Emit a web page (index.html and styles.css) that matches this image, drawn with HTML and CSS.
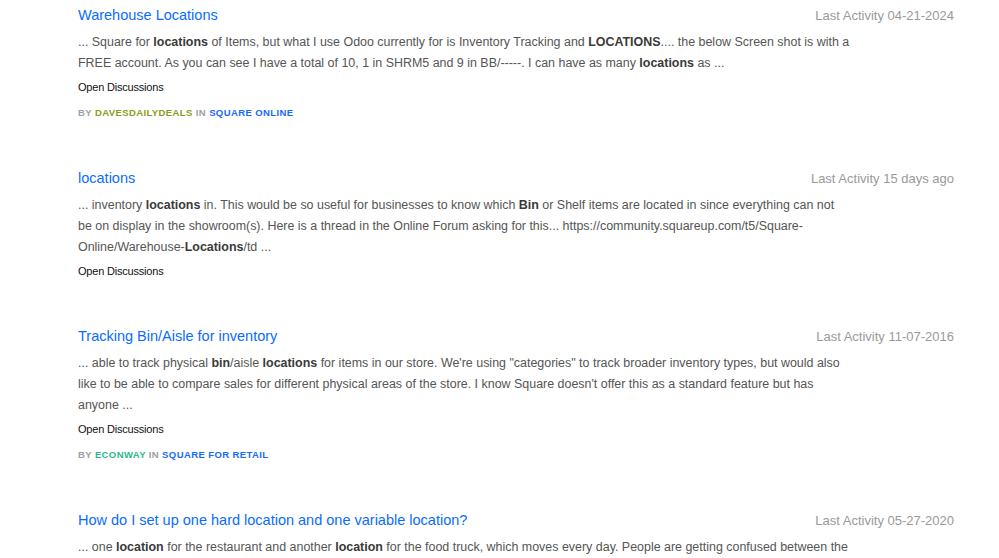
FILE: index.html
```html
<!DOCTYPE html>
<html>
<head>
<meta charset="utf-8">
<link rel="stylesheet" href="styles.css">
</head>
<body>
<div class="results">
  <div class="item">
    <div class="head">
      <a class="title">Warehouse Locations</a>
      <span class="date">Last Activity 04-21-2024</span>
    </div>
    <p class="snippet">... Square for <b>locations</b> of Items, but what I use Odoo currently for is Inventory Tracking and <b>LOCATIONS</b>.... the below Screen shot is with a FREE account. As you can see I have a total of 10, 1 in SHRM5 and 9 in BB/-----. I can have as many <b>locations</b> as ...</p>
    <div class="board">Open Discussions</div>
    <div class="by">BY <span class="author olive">DAVESDAILYDEALS</span> IN <span class="place">SQUARE ONLINE</span></div>
  </div>
  <div class="item">
    <div class="head">
      <a class="title">locations</a>
      <span class="date">Last Activity 15 days ago</span>
    </div>
    <p class="snippet">... inventory <b>locations</b> in. This would be so useful for businesses to know which <b>Bin</b> or Shelf items are located in since everything can not be on display in the showroom(s). Here is a thread in the Online Forum asking for this... https://community.squareup.com/t5/Square-Online/Warehouse-<b>Locations</b>/td ...</p>
    <div class="board">Open Discussions</div>
  </div>
  <div class="item">
    <div class="head">
      <a class="title">Tracking Bin/Aisle for inventory</a>
      <span class="date">Last Activity 11-07-2016</span>
    </div>
    <p class="snippet">... able to track physical <b>bin</b>/aisle <b>locations</b> for items in our store. We're using "categories" to track broader inventory types, but would also like to be able to compare sales for different physical areas of the store. I know Square doesn't offer this as a standard feature but has anyone ...</p>
    <div class="board">Open Discussions</div>
    <div class="by">BY <span class="author teal">ECONWAY</span> IN <span class="place">SQUARE FOR RETAIL</span></div>
  </div>
  <div class="item">
    <div class="head">
      <a class="title">How do I set up one hard location and one variable location?</a>
      <span class="date">Last Activity 05-27-2020</span>
    </div>
    <p class="snippet">... one <b>location</b> for the restaurant and another <b>location</b> for the food truck, which moves every day. People are getting confused between the two addresses when they search for us on Google and we want to fix this ...</p>
    <div class="board">Open Discussions</div>
  </div>
</div>
</body>
</html>
```
FILE: styles.css
```css
html, body {
  margin: 0;
  padding: 0;
  background: #ffffff;
}
body {
  font-family: "Liberation Sans", Arial, sans-serif;
  overflow: hidden;
}
.results {
  padding: 4px 45px 0 78px;
  display: flex;
  flex-direction: column;
  gap: 46px;
}
.item {
  display: flex;
  flex-direction: column;
}
.head {
  display: flex;
  justify-content: space-between;
  align-items: baseline;
  height: 22px;
}
.title {
  color: #0a6cff;
  font-size: 14.5px;
  line-height: 22px;
  cursor: pointer;
}
.date {
  color: #9a9a9a;
  font-size: 13px;
}
.snippet {
  margin: 6px 0 0;
  max-width: 773px;
  color: #555555;
  font-size: 12.45px;
  line-height: 21px;
}
.snippet b {
  color: #3a3a3a;
}
.board {
  margin-top: 5px;
  font-size: 11px;
  line-height: 16px;
  color: #111111;
  letter-spacing: -0.2px;
}
.by {
  margin-top: 10px;
  font-size: 9.5px;
  line-height: 16px;
  font-weight: bold;
  letter-spacing: 0.4px;
  color: #9e9e9e;
}
.author.olive { color: #8a9c17; }
.author.teal { color: #2cb88f; }
.place { color: #1769ff; }
```
